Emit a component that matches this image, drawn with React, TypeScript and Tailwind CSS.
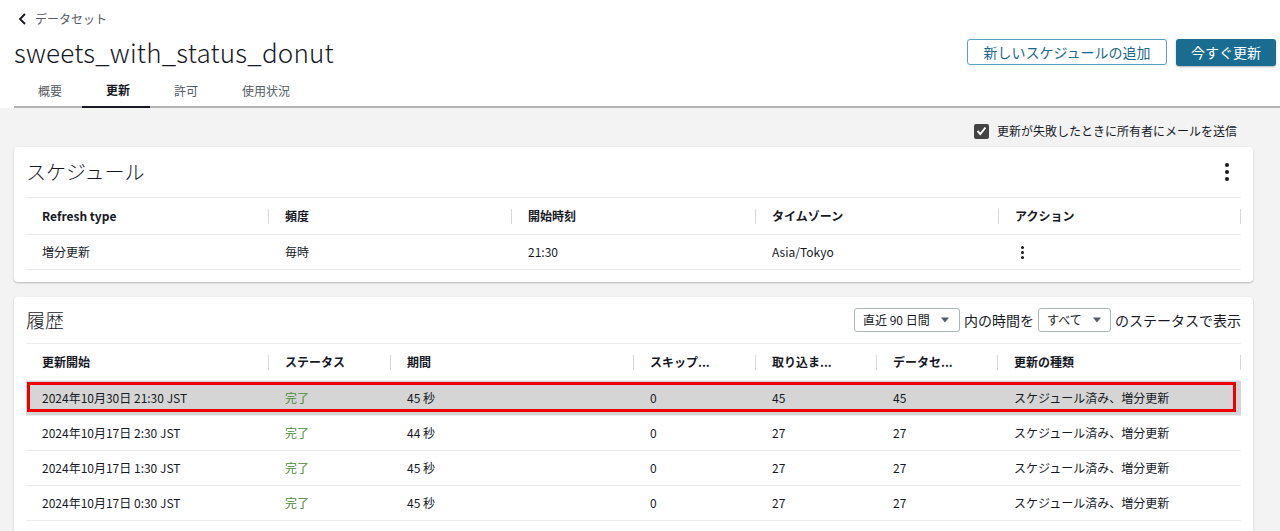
import React from "react";

const font = "font-['Noto_Sans_CJK_JP','Noto_Sans',sans-serif]";

function Kebab({ big }: { big?: boolean }) {
  const s = big ? "w-[4px] h-[4px]" : "w-[3px] h-[3px]";
  return (
    <div className={`flex w-fit flex-col items-center ${big ? "gap-[3px]" : "gap-[2px]"}`}>
      <span className={`${s} rounded-full bg-[#16191f]`} />
      <span className={`${s} rounded-full bg-[#16191f]`} />
      <span className={`${s} rounded-full bg-[#16191f]`} />
    </div>
  );
}

function Caret() {
  return (
    <svg width="10" height="6" viewBox="0 0 10 6" className="ml-[10px]">
      <path d="M1 0.5 L9 0.5 L5 5.5 Z" fill="#545b64" />
    </svg>
  );
}

const scheduleCols = [243, 243, 244, 243, 242];
const scheduleHead = ["Refresh type", "頻度", "開始時刻", "タイムゾーン", "アクション"];

const histCols = [243, 122, 243, 122, 121, 121, 243];
const histHead = ["更新開始", "ステータス", "期間", "スキップ...", "取り込ま...", "データセ...", "更新の種類"];

const history = [
  { start: "2024年10月30日 21:30 JST", dur: "45 秒", skip: "0", ing: "45", ds: "45" },
  { start: "2024年10月17日 2:30 JST", dur: "44 秒", skip: "0", ing: "27", ds: "27" },
  { start: "2024年10月17日 1:30 JST", dur: "45 秒", skip: "0", ing: "27", ds: "27" },
  { start: "2024年10月17日 0:30 JST", dur: "45 秒", skip: "0", ing: "27", ds: "27" },
];

function HeaderRow({ cols, labels }: { cols: number[]; labels: string[] }) {
  return (
    <div className="flex h-[37px] items-center border-t border-[#eaeded]">
      {labels.map((l, i) => (
        <div
          key={i}
          style={{ width: cols[i] }}
          className="flex items-center justify-between pl-[16px] text-[12px] font-bold text-[#16191f]"
        >
          <span>{l}</span>
          <span className="w-px h-[15px] bg-[#d5dbdb]" />
        </div>
      ))}
    </div>
  );
}

export default function App() {
  return (
    <div className={`${font} w-full h-[531px] overflow-hidden bg-[#f3f3f3] text-[#16191f]`}>
      {/* header */}
      <div className="bg-white">
        <div className="flex justify-between">
          <div className="pl-[14px]">
            <div className="flex items-center h-[20px] mt-[9px] pl-[4px] text-[12px] text-[#545b64]">
              <svg width="10" height="12" viewBox="0 0 10 12" className="mr-[7px]">
                <path d="M7 1 L2 6 L7 11" stroke="#16191f" strokeWidth="1.8" fill="none" />
              </svg>
              データセット
            </div>
            <div className="h-[44px] flex items-center text-[26px] font-light tracking-[0.2px]">
              sweets_with_status_donut
            </div>
          </div>
          <div className="flex items-start gap-[9px] pt-[39px] pr-[4px]">
            <button className="h-[26px] w-[200px] rounded-[3px] border border-[#5b9fbf] text-[14px] text-[#1b6a8d]">
              新しいスケジュールの追加
            </button>
            <button className="h-[27px] w-[100px] rounded-[3px] bg-[#1a6d91] text-[14px] text-white shadow-[0_1px_2px_rgba(0,0,0,0.3)]">
              今すぐ更新
            </button>
          </div>
        </div>
        <div className="ml-[14px] flex h-[35px] border-b-2 border-[#b5b5b5]">
          {["概要", "更新", "許可", "使用状況"].map((t, i) => (
            <div
              key={t}
              className={`h-[35px] flex items-center pl-[24px] pr-[20px] text-[12px] ${
                i === 1 ? "border-b-2 border-[#16191f] font-bold -mb-[2px] text-[#16191f]" : "text-[#545b64]"
              }`}
            >
              {t}
            </div>
          ))}
        </div>
      </div>

      {/* content */}
      <div className="ml-[14px] w-[1239px] pt-[12px]">
        <div className="flex h-[22px] items-center justify-end pr-[16px] text-[12px] text-[#16191f]">
          <span className="mr-[8px] flex h-[15px] w-[15px] items-center justify-center rounded-[2px] bg-[#444]">
            <svg width="11" height="10" viewBox="0 0 11 10">
              <path d="M1.5 5 L4.3 8 L9.5 1.5" stroke="white" strokeWidth="2" fill="none" />
            </svg>
          </span>
          更新が失敗したときに所有者にメールを送信
        </div>

        {/* schedule */}
        <div className="mt-[5px] rounded-[4px] bg-white px-[12px] pb-[12px] shadow-[0_1px_2px_rgba(0,0,0,0.25)]">
          <div className="flex h-[50px] items-center justify-between">
            <span className="text-[20px] font-light">スケジュール</span>
            <span className="mr-[12px]">
              <Kebab big />
            </span>
          </div>
          <HeaderRow cols={scheduleCols} labels={scheduleHead} />
          <div className="flex h-[36px] items-center border-y border-[#eaeded] text-[12px]">
            <div style={{ width: scheduleCols[0] }} className="pl-[16px]">増分更新</div>
            <div style={{ width: scheduleCols[1] }} className="pl-[16px]">毎時</div>
            <div style={{ width: scheduleCols[2] }} className="pl-[16px]">21:30</div>
            <div style={{ width: scheduleCols[3] }} className="pl-[16px]">Asia/Tokyo</div>
            <div style={{ width: scheduleCols[4] }} className="pl-[22px]">
              <Kebab />
            </div>
          </div>
        </div>

        {/* history */}
        <div className="mt-[15px] rounded-[4px] bg-white px-[12px] pb-[12px] shadow-[0_1px_2px_rgba(0,0,0,0.25)]">
          <div className="flex h-[46px] items-center justify-between">
            <span className="text-[19px] font-light">履歴</span>
            <div className="flex items-center text-[14px]">
              <span className="flex h-[24px] w-[106px] items-center rounded-[3px] border border-[#aab7b8] pl-[8px] text-[12px]">
                直近 90 日間
                <Caret />
              </span>
              <span className="mx-[4px]">内の時間を</span>
              <span className="flex h-[24px] w-[73px] items-center rounded-[3px] border border-[#aab7b8] pl-[8px] text-[12px]">
                すべて
                <Caret />
              </span>
              <span className="ml-[4px]">のステータスで表示</span>
            </div>
          </div>
          <HeaderRow cols={histCols} labels={histHead} />
          {history.map((r, idx) => (
            <div
              key={idx}
              className={`relative flex h-[35px] items-center border-t border-[#eaeded] text-[12px] ${
                idx === 0 ? "bg-[#d5d5d5]" : ""
              }`}
            >
              {idx === 0 && (
                <div className="absolute left-[1px] right-[5px] top-[1px] bottom-[3px] border-[3px] border-[#ee0000]" />
              )}
              <div style={{ width: histCols[0] }} className="pl-[16px]">{r.start}</div>
              <div style={{ width: histCols[1] }} className="pl-[16px] text-[#4a8b35]">完了</div>
              <div style={{ width: histCols[2] }} className="pl-[16px]">{r.dur}</div>
              <div style={{ width: histCols[3] }} className="pl-[16px]">{r.skip}</div>
              <div style={{ width: histCols[4] }} className="pl-[16px]">{r.ing}</div>
              <div style={{ width: histCols[5] }} className="pl-[16px]">{r.ds}</div>
              <div style={{ width: histCols[6] }} className="pl-[16px]">スケジュール済み、増分更新</div>
            </div>
          ))}
          <div className="h-[40px] border-t border-[#eaeded]" />
        </div>
      </div>
    </div>
  );
}
